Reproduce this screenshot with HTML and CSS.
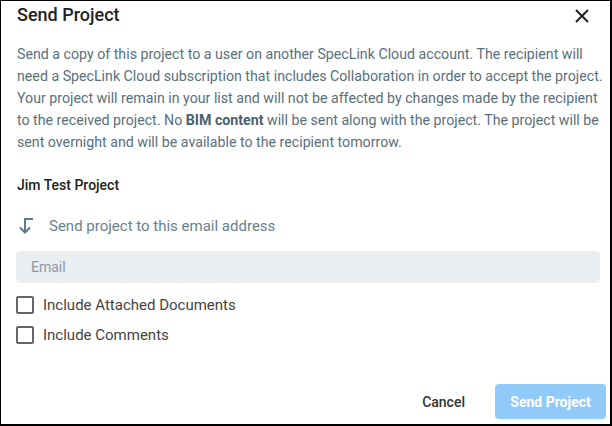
FILE: index.html
```html
<!DOCTYPE html>
<html>
<head>
<meta charset="utf-8">
<link rel="stylesheet" href="styles.css">
</head>
<body>
<div class="dialog">
  <div class="header">
    <h1 class="title">Send Project</h1>
    <button class="close" aria-label="Close">
      <svg width="16" height="16" viewBox="0 0 16 16"><path d="M2 2 L14 14 M14 2 L2 14" stroke="#222" stroke-width="2" fill="none"/></svg>
    </button>
  </div>
  <p class="desc">Send a copy of this project to a user on another SpecLink Cloud account. The recipient will<br>need a SpecLink Cloud subscription that includes Collaboration in order to accept the project.<br>Your project will remain in your list and will not be affected by changes made by the recipient<br>to the received project. No <b>BIM content</b> will be sent along with the project. The project will be<br>sent overnight and will be available to the recipient tomorrow.</p>
  <div class="project">Jim Test Project</div>
  <div class="sendto">
    <svg class="arrow" width="16" height="18" viewBox="0 0 16 18"><path d="M15 2 H7 V15.5" stroke="#5f7a8a" stroke-width="2" fill="none"/><path d="M2 10.5 L7 15.5 L12 10.5" stroke="#5f7a8a" stroke-width="2" fill="none"/></svg>
    <span>Send project to this email address</span>
  </div>
  <div class="email">Email</div>
  <label class="check"><span class="box"></span>Include Attached Documents</label>
  <label class="check"><span class="box"></span>Include Comments</label>
  <div class="spacer"></div>
  <div class="actions">
    <button class="cancel">Cancel</button>
    <button class="send">Send Project</button>
  </div>
</div>
</body>
</html>
```
FILE: styles.css
```css
* { box-sizing: border-box; }
html, body { margin: 0; padding: 0; }
body { width: 612px; height: 426px; background: #fff; font-family: Roboto, "Noto Sans", sans-serif; }
.dialog {
  width: 612px; height: 426px;
  border-top: 1px solid #000; border-left: 1px solid #000;
  border-right: 2px solid #000; border-bottom: 2px solid #000;
  display: flex; flex-direction: column;
  padding: 0 4px 0 15px;
}
.header { display: flex; align-items: center; justify-content: space-between; height: 27px; }
.title { margin: 0 0 0 1px; font-size: 18px; font-weight: 500; color: #222; }
.close { border: 0; background: none; padding: 0; margin-right: 16px; margin-top: 3px; display: flex; }
.desc { margin: 15px 0 0 1px; font-size: 14.2px; line-height: 22px; color: #5a6f7c; white-space: nowrap; }
.desc b { font-weight: 700; color: #4b5f6c; }
.project { margin: 24px 0 0 1px; font-size: 14px; line-height: 16px; font-weight: 500; color: #222; }
.sendto { display: flex; align-items: center; margin-top: 22px; height: 22px; color: #6a7f8c; font-size: 15px; }
.arrow { margin-left: 2px; margin-right: 15px; }
.email {
  margin-top: 14px; height: 32px; width: 584px;
  background: #eceff1; border-radius: 4px;
  padding-left: 15px; display: flex; align-items: center;
  font-size: 14px; color: #8a9aa6;
}
.check { display: flex; align-items: center; font-size: 15px; color: #444; height: 30px; }
.check:first-of-type { margin-top: 7px; }
.box { width: 18px; height: 18px; border: 2px solid #666; border-radius: 2px; margin-right: 9px; }
.spacer { flex: 1; }
.actions { display: flex; justify-content: flex-end; align-items: center; margin-bottom: 5px; }
.cancel { border: 0; background: none; font-family: inherit; font-size: 14px; font-weight: 500; color: #333; padding: 0; margin-right: 30px; }
.send {
  border: 0; background: #90caf9; color: #fff; font-family: inherit; font-size: 14px; font-weight: 700;
  width: 111px; height: 35px; border-radius: 4px;
}
```
